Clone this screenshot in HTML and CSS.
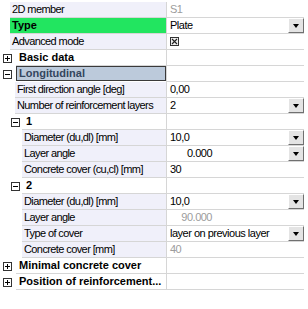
FILE: index.html
```html
<!DOCTYPE html>
<html lang="en">

<head>
    <meta charset="UTF-8">
    <meta name="viewport" content="width=device-width, initial-scale=1.0">
    <title>2D member properties</title>
    <link rel="stylesheet" href="styles.css">
</head>

<body>

    <div class="props">
        <!-- top level -->
        <div class="row">
            <div class="name lvl0"><span class="label">2D member</span></div>
            <div class="value muted"><span class="text">S1</span></div>
        </div>
        <div class="row">
            <div class="name lvl0"><span class="label type">Type</span></div>
            <div class="value"><span class="text">Plate</span><span class="drop"></span></div>
        </div>
        <div class="row">
            <div class="name lvl0"><span class="label">Advanced mode</span></div>
            <div class="value">
                <span class="text">
                    <svg class="check" width="9" height="9" viewBox="0 0 9 9">
                        <rect x="0.5" y="0.5" width="8" height="8" fill="#eee" stroke="#333" />
                        <path d="M2 2 L7 7 M7 2 L2 7" stroke="#222" stroke-width="1.1" />
                    </svg>
                </span>
            </div>
        </div>

        <!-- Basic data -->
        <div class="row">
            <div class="name cat0"><span class="gutter"><span class="toggle plus"></span></span><span class="label">Basic data</span></div>
            <div class="value"></div>
        </div>

        <!-- Longitudinal -->
        <div class="row">
            <div class="name cat0"><span class="gutter"><span class="toggle"></span></span><span class="label selected">Longitudinal</span></div>
            <div class="value"></div>
        </div>
        <div class="row">
            <div class="name lvl1"><span class="label">First direction angle [deg]</span></div>
            <div class="value"><span class="text">0,00</span></div>
        </div>
        <div class="row">
            <div class="name lvl1"><span class="label">Number of reinforcement layers</span></div>
            <div class="value"><span class="text">2</span><span class="drop"></span></div>
        </div>

        <!-- layer 1 -->
        <div class="row">
            <div class="name cat1"><span class="gutter"><span class="toggle"></span></span><span class="label">1</span></div>
            <div class="value"></div>
        </div>
        <div class="row">
            <div class="name lvl2"><span class="label">Diameter (du,dl) [mm]</span></div>
            <div class="value"><span class="text">10,0</span><span class="drop"></span></div>
        </div>
        <div class="row">
            <div class="name lvl2"><span class="label">Layer angle</span></div>
            <div class="value"><span class="text"><span class="num">0.000</span></span><span class="drop"></span></div>
        </div>
        <div class="row">
            <div class="name lvl2"><span class="label">Concrete cover (cu,cl) [mm]</span></div>
            <div class="value"><span class="text">30</span></div>
        </div>

        <!-- layer 2 -->
        <div class="row">
            <div class="name cat1"><span class="gutter"><span class="toggle"></span></span><span class="label">2</span></div>
            <div class="value"></div>
        </div>
        <div class="row">
            <div class="name lvl2"><span class="label">Diameter (du,dl) [mm]</span></div>
            <div class="value"><span class="text">10,0</span><span class="drop"></span></div>
        </div>
        <div class="row">
            <div class="name lvl2"><span class="label">Layer angle</span></div>
            <div class="value muted"><span class="text"><span class="num">90.000</span></span></div>
        </div>
        <div class="row">
            <div class="name lvl2"><span class="label">Type of cover</span></div>
            <div class="value"><span class="text">layer on previous layer</span><span class="drop"></span></div>
        </div>
        <div class="row">
            <div class="name lvl2"><span class="label">Concrete cover [mm]</span></div>
            <div class="value muted"><span class="text">40</span></div>
        </div>

        <!-- collapsed groups -->
        <div class="row">
            <div class="name cat0"><span class="gutter"><span class="toggle plus"></span></span><span class="label">Minimal concrete cover</span></div>
            <div class="value"></div>
        </div>
        <div class="row">
            <div class="name cat0"><span class="gutter"><span class="toggle plus"></span></span><span class="label">Position of reinforcement...</span></div>
            <div class="value"></div>
        </div>
    </div>

</body>

</html>
```

FILE: styles.css
```css
body {
    margin: 0;
    background-color: #fff;
    font-family: "Liberation Sans", Arial, sans-serif;
    font-size: 11px;
    color: #000;
}

.props {
    width: 304px;
    padding-top: 2px;
}

.row {
    display: flex;
    height: 16px;
}

/* left column */

.name {
    width: 166px;
    box-sizing: border-box;
    display: flex;
    flex-shrink: 0;
}

.label {
    flex: 1;
    min-width: 0;
    height: 15px;
    line-height: 15px;
    padding-left: 2px;
    letter-spacing: -0.6px;
    background-color: #f0f0fa;
    border-bottom: 1px solid #d6d6d6;
    white-space: nowrap;
    overflow: hidden;
}

.lvl0 {
    padding-left: 10px;
}

.lvl1 {
    padding-left: 15px;
}

.lvl2 {
    padding-left: 22px;
}

.gutter {
    display: flex;
    align-items: center;
}

.cat0 .gutter {
    width: 16px;
    padding-left: 3px;
    box-sizing: border-box;
}

.cat1 .gutter {
    width: 22px;
    padding-left: 11px;
    box-sizing: border-box;
}

.cat0 .label,
.cat1 .label {
    background-color: #fff;
    font-weight: bold;
    letter-spacing: 0;
    padding-left: 3px;
}

.cat1 .label {
    padding-left: 4px;
}

.label.type {
    background-color: #22e560;
    font-weight: bold;
    letter-spacing: 0;
}

.label.selected {
    height: 13px;
    line-height: 13px;
    background-color: #bccadb;
    color: #34465e;
    border: 1px solid #3a3a3a;
    padding-left: 2px;
}

/* expand / collapse box */

.toggle {
    position: relative;
    width: 7px;
    height: 7px;
    border: 1px solid #333;
    background-color: #fff;
}

.toggle::before {
    content: "";
    position: absolute;
    left: 1px;
    top: 3px;
    width: 5px;
    height: 1px;
    background-color: #000;
}

.toggle.plus::after {
    content: "";
    position: absolute;
    left: 3px;
    top: 1px;
    width: 1px;
    height: 5px;
    background-color: #000;
}

/* right column */

.value {
    flex: 1;
    display: flex;
    height: 15px;
    border-left: 1px solid #d6d6d6;
    border-bottom: 1px solid #d6d6d6;
}

.value .text {
    flex: 1;
    line-height: 15px;
    padding-left: 3px;
    letter-spacing: -0.5px;
    white-space: nowrap;
    overflow: hidden;
}

.value.muted {
    color: #9c9c9c;
}

.num {
    display: inline-block;
    width: 42px;
    text-align: right;
}

.check {
    display: block;
    margin-top: 3px;
}

.drop {
    position: relative;
    width: 16px;
    height: 15px;
    box-sizing: border-box;
    background-color: #e4e4e4;
    border: 1px solid;
    border-color: #fff #707070 #707070 #fff;
}

.drop::after {
    content: "";
    position: absolute;
    left: 4px;
    top: 5px;
    border-left: 3px solid transparent;
    border-right: 3px solid transparent;
    border-top: 4px solid #000;
}
```
